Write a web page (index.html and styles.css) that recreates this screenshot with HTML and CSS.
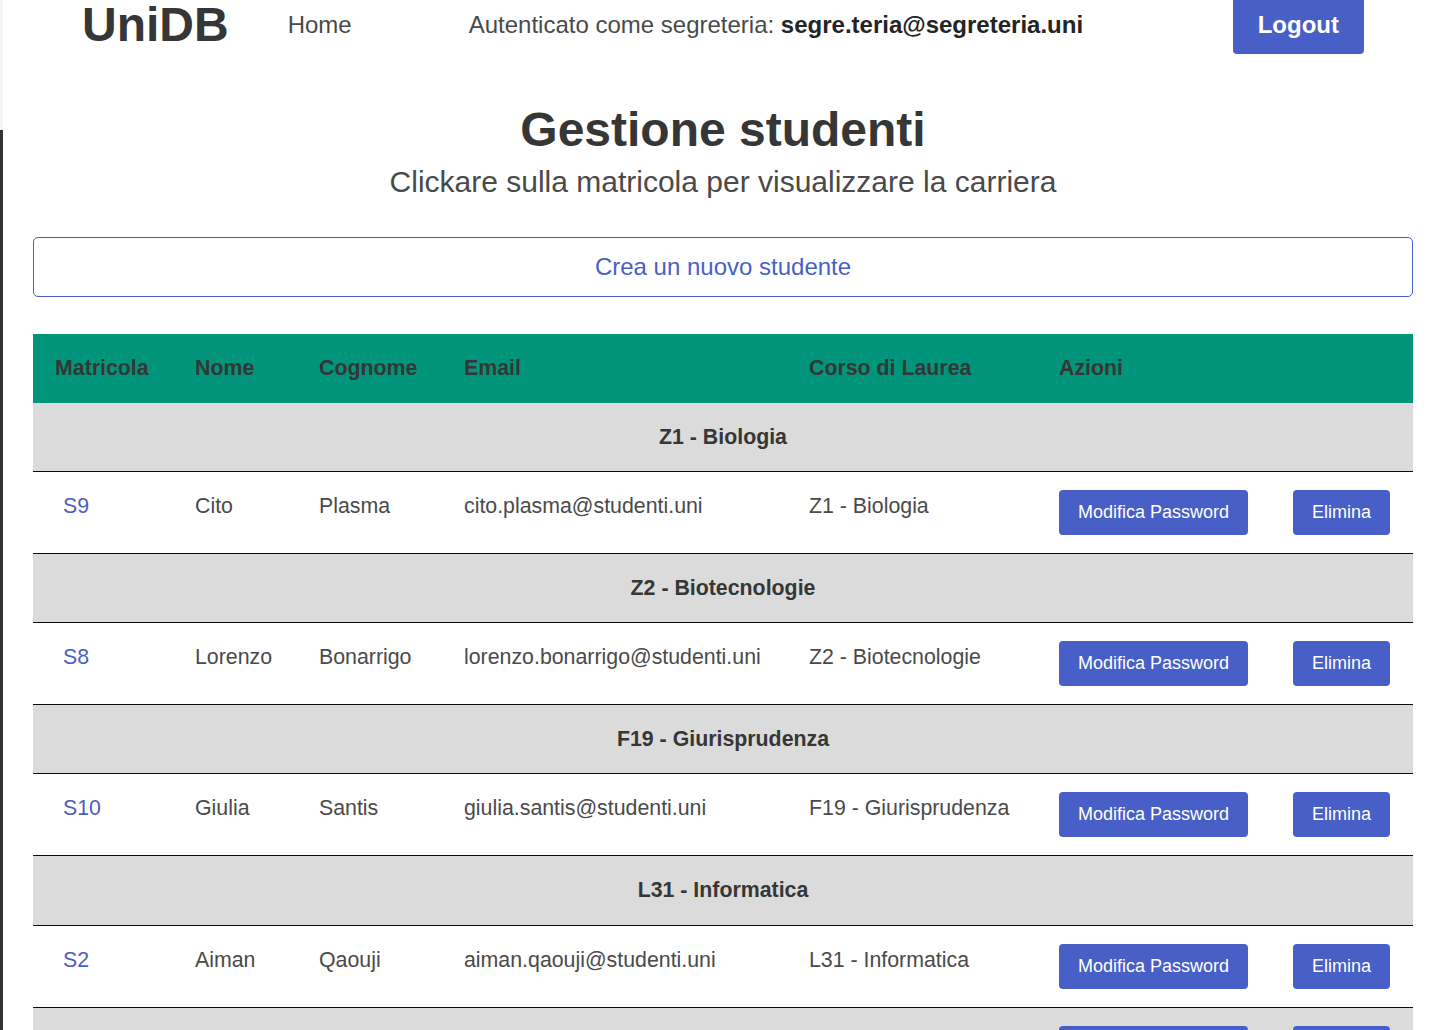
FILE: index.html
```html
<!DOCTYPE html>
<html lang="it">
<head>
<meta charset="utf-8">
<title>UniDB - Gestione studenti</title>
<link rel="stylesheet" href="styles.css">
</head>
<body>
<div class="edge"></div>
<header class="topbar">
  <div class="logo">UniDB</div>
  <a class="nav-home" href="#">Home</a>
  <div class="auth">Autenticato come segreteria: <strong>segre.teria@segreteria.uni</strong></div>
  <a class="btn btn-logout" href="#">Logout</a>
</header>
<main class="content">
  <h1 class="title">Gestione studenti</h1>
  <p class="subtitle">Clickare sulla matricola per visualizzare la carriera</p>
  <a class="create" href="#">Crea un nuovo studente</a>
  <table class="students">
    <colgroup>
      <col class="c1"><col class="c2"><col class="c3"><col class="c4"><col class="c5"><col class="c6"><col class="c7">
    </colgroup>
    <thead>
      <tr><th>Matricola</th><th>Nome</th><th>Cognome</th><th>Email</th><th>Corso di Laurea</th><th>Azioni</th><th></th></tr>
    </thead>
    <tbody>
      <tr class="group"><td colspan="7">Z1 - Biologia</td></tr>
      <tr><td><a class="mat" href="#">S9</a></td><td>Cito</td><td>Plasma</td><td>cito.plasma@studenti.uni</td><td>Z1 - Biologia</td><td><a class="btn" href="#">Modifica Password</a></td><td><a class="btn" href="#">Elimina</a></td></tr>
      <tr class="group"><td colspan="7">Z2 - Biotecnologie</td></tr>
      <tr><td><a class="mat" href="#">S8</a></td><td>Lorenzo</td><td>Bonarrigo</td><td>lorenzo.bonarrigo@studenti.uni</td><td>Z2 - Biotecnologie</td><td><a class="btn" href="#">Modifica Password</a></td><td><a class="btn" href="#">Elimina</a></td></tr>
      <tr class="group"><td colspan="7">F19 - Giurisprudenza</td></tr>
      <tr><td><a class="mat" href="#">S10</a></td><td>Giulia</td><td>Santis</td><td>giulia.santis@studenti.uni</td><td>F19 - Giurisprudenza</td><td><a class="btn" href="#">Modifica Password</a></td><td><a class="btn" href="#">Elimina</a></td></tr>
      <tr class="group"><td colspan="7">L31 - Informatica</td></tr>
      <tr><td><a class="mat" href="#">S2</a></td><td>Aiman</td><td>Qaouji</td><td>aiman.qaouji@studenti.uni</td><td>L31 - Informatica</td><td><a class="btn" href="#">Modifica Password</a></td><td><a class="btn" href="#">Elimina</a></td></tr>
      <tr class="hovered"><td><a class="mat" href="#">S1</a></td><td>Mario</td><td>Rossi</td><td>mario.rossi@studenti.uni</td><td>L31 - Informatica</td><td><a class="btn" href="#">Modifica Password</a></td><td><a class="btn" href="#">Elimina</a></td></tr>
    </tbody>
  </table>
</main>
</body>
</html>
```
FILE: styles.css
```css
html, body {
  margin: 0;
  padding: 0;
  background: #ffffff;
  overflow: hidden;
}
body {
  font-family: "Liberation Sans", Arial, sans-serif;
  color: #4a4a4a;
  position: relative;
  min-height: 1030px;
}
a { text-decoration: none; }

.edge {
  position: absolute;
  left: 0;
  top: 0;
  width: 3px;
  height: 100%;
  background: linear-gradient(#f3f3f3 0, #f3f3f3 130px, #333333 130px);
}

.topbar {
  display: flex;
  align-items: center;
  height: 59px;
  margin-top: -5px;
  padding-left: 82px;
}
.logo {
  font-size: 48px;
  font-weight: 700;
  color: #363636;
  line-height: 1;
  margin-top: 1px;
}
.nav-home {
  margin-left: 59px;
  font-size: 24px;
  color: #4a4a4a;
}
.auth {
  margin-left: 117px;
  font-size: 24px;
  color: #4a4a4a;
}
.auth strong { color: #242424; font-weight: 700; }

.btn {
  display: inline-block;
  background: #485fc7;
  color: #ffffff;
  border-radius: 4px;
  font-size: 18px;
  line-height: 27px;
  padding: 9px 19px;
  white-space: nowrap;
}
.btn-logout {
  margin-left: auto;
  margin-right: 70px;
  font-size: 24px;
  font-weight: 700;
  line-height: 59px;
  height: 59px;
  padding: 0 25px;
  box-sizing: border-box;
}

.content {
  padding: 0 21px 0 33px;
}
.title {
  margin: 49px 0 0;
  text-align: center;
  font-size: 48px;
  line-height: 54px;
  font-weight: 700;
  color: #363636;
}
.subtitle {
  margin: 5.5px 0 0;
  text-align: center;
  font-size: 30px;
  line-height: 37.5px;
  color: #4a4a4a;
}
.create {
  display: block;
  margin-top: 36.5px;
  height: 60px;
  box-sizing: border-box;
  border: 1px solid #485fc7;
  border-radius: 5px;
  color: #485fc7;
  font-size: 24px;
  line-height: 58px;
  text-align: center;
}

.students {
  margin-top: 37px;
  width: 100%;
  border-collapse: collapse;
  table-layout: fixed;
  font-size: 21.33px;
  line-height: 32px;
}
.c1 { width: 140px; }
.c2 { width: 124px; }
.c3 { width: 145px; }
.c4 { width: 345px; }
.c5 { width: 250px; }
.c6 { width: 234px; }
.c7 { width: 142px; }

.students th {
  background: #00957a;
  color: #363636;
  font-weight: 700;
  text-align: left;
  padding: 18px 22px 19px;
  white-space: nowrap;
}
.students td {
  padding: 18px 22px;
  vertical-align: top;
  border-bottom: 1px solid #0a0a0a;
  white-space: nowrap;
}
.students tr.group td {
  background: #dbdbdb;
  text-align: center;
  font-weight: 700;
  color: #363636;
  padding-bottom: 18.34px;
}
.students tr.hovered td {
  background: #dbdbdb;
}
.mat {
  color: #485fc7;
  padding-left: 8px;
}
```
